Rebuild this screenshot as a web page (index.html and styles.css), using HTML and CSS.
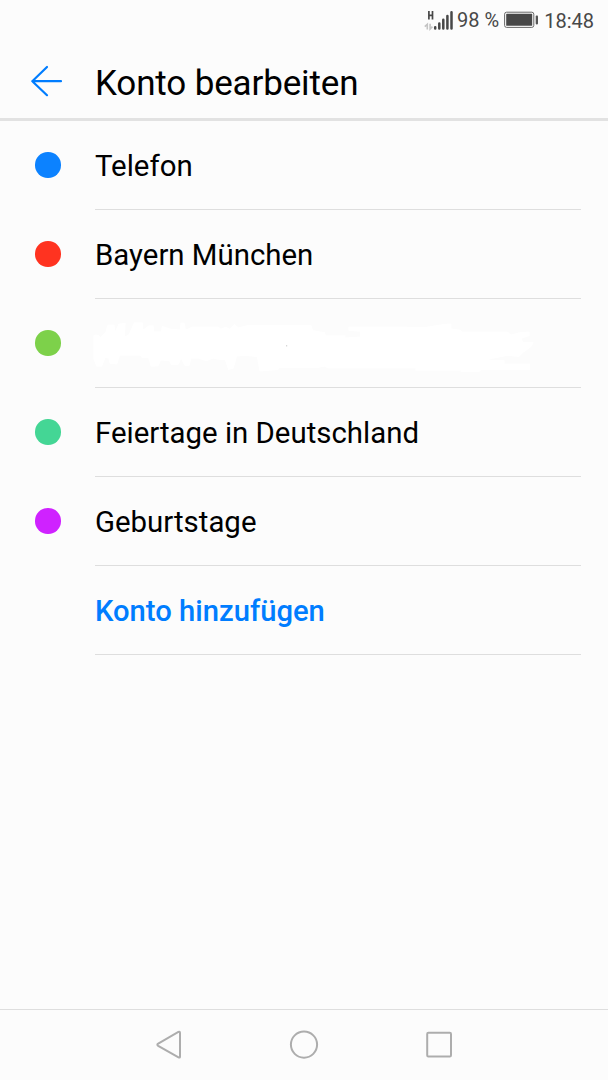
FILE: index.html
```html
<!DOCTYPE html>
<html lang="de">
<head>
<meta charset="utf-8">
<title>Konto bearbeiten</title>
<link rel="stylesheet" href="styles.css">
</head>
<body>
<div class="screen">
  <div class="status">
    <svg class="signal" width="30" height="22" viewBox="0 0 30 22">
      <g fill="none" stroke="#484848" stroke-width="1.7"><path d="M4.9 1v8.5M8.5 1v8.5M4.9 5.3h3.6"/></g>
      <path d="M3.3 19.5V14.3L0.8 16.7M6.1 13.8v5.2l2.3-2.4" fill="none" stroke="#c4c4c4" stroke-width="1.6"/>
      <path d="M11.2 17.2v1.2M15.3 13.4v5M19.3 9.7v8.7M23.4 5.9v12.5M27.5 2.2v16.2" fill="none" stroke="#484848" stroke-width="2.5" stroke-linecap="round"/>
    </svg>
    <span class="percent">98 %</span>
    <svg class="battery" width="35" height="18" viewBox="0 0 35 18">
      <rect x=".6" y="1.2" width="29.2" height="15.2" rx="2" fill="none" stroke="#686868" stroke-width="1"/>
      <rect x="2.2" y="2.8" width="26" height="12" rx=".6" fill="#484848"/>
      <rect x="31.7" y="4.6" width="2.3" height="8.8" rx=".8" fill="#555"/>
    </svg>
    <span class="clock">18:48</span>
  </div>
  <header class="header">
    <svg class="back" width="34" height="34" viewBox="0 0 34 34"><path d="M17 3 2.3 17.2 17 31.2M2.3 17.2H31" fill="none" stroke="#007dff" stroke-width="2.2" stroke-linecap="round" stroke-linejoin="round"/></svg>
    <h1 class="title">Konto bearbeiten</h1>
  </header>
  <main class="list">
    <div class="row"><i class="dot blue"></i><div class="label">Telefon</div></div>
    <div class="row"><i class="dot red"></i><div class="label">Bayern München</div></div>
    <div class="row"><i class="dot green"></i><div class="label">
      <svg class="redaction" width="486" height="61" viewBox="44 20 1444 181">
        <path fill="#fff" d="M39 78Q50 70 60 82L75 68 81 46H102L104 65 114 43 135 40 133 80 144 75 160 39H186L187 60 204 48 218 48 220 66H240L243 49 268 58 296 60 298 40 310 40 314 60 332 52H410L418 58 432 52 445 58 458 44 470 54 496 47H687L692 62 727 68 730 78 788 77V84L832 81V67L797 64V52H970L1020 53 1080 44 1103 42V57L1130 61 1135 67H1270L1280 75 1305 68 1335 66V79L1312 87 1316 98H1348L1340 112 1317 128 1303 142 1270 138 1210 150 1261 151V162H1337V180H1192L1185 186H1130V182H996V175H735L727 170 710 174H592L588 180 533 185 525 142 490 138 466 140 456 176 440 180 430 150 410 150 395 146 375 154 350 146 330 146 325 168H310L300 148 292 165H270L265 154 240 152 232 169 210 171 202 145H184L178 137H118L110 164 88 162 84 146 75 144 65 170 48 170 39 146Z"/>
        <rect x="612" y="107" width="3" height="3" fill="#bbb"/>
      </svg></div></div>
    <div class="row"><i class="dot mint"></i><div class="label">Feiertage in Deutschland</div></div>
    <div class="row"><i class="dot purple"></i><div class="label">Geburtstage</div></div>
    <div class="row"><i class="dot"></i><div class="label add">Konto hinzufügen</div></div>
  </main>
  <nav class="nav">
    <svg width="30" height="30" viewBox="0 0 30 30"><path d="M4.2 13.7 24.4 2Q26 1.3 26 3.1v23.4q0 1.6-1.5.9L4.2 15.8Q2.5 14.7 4.2 13.7Z"/></svg>
    <svg width="30" height="30" viewBox="0 0 30 30"><circle cx="15" cy="14.6" r="13.1"/></svg>
    <svg width="30" height="30" viewBox="0 0 30 30"><rect x="3.2" y="2.7" width="23.8" height="23.8" rx="1.2"/></svg>
  </nav>
</div>
</body>
</html>
```
FILE: styles.css
```css
* { box-sizing: border-box; }
body { margin: 0; background: #fcfcfc; font-family: Roboto, sans-serif; color: #000; }
.screen { width: 608px; height: 1080px; display: flex; flex-direction: column; }
.status { height: 42px; display: flex; align-items: center; padding: 0 14px 2px 424px; color: #484848; font-size: 20px; line-height: 24px; white-space: nowrap; }
.signal { flex: none; margin-top: 1px; }
.percent { width: 47px; padding-left: 3px; flex: none; }
.battery { flex: none; margin-left: 3px; }
.clock { margin-left: auto; padding-top: 2px; }
.header { height: 79px; display: flex; align-items: center; padding-left: 30px; border-bottom: 3px solid #e2e2e2; }
.back { flex: none; margin: 2px 31px 0 0; }
.title { margin: 7px 0 0; font-size: 35px; line-height: 42px; font-weight: 400; letter-spacing: -0.15px; }
.list { flex: 1; }
.row { height: 89px; display: flex; align-items: center; padding: 0 27px 0 35px; }
.dot { width: 25.5px; height: 25.5px; border-radius: 50%; margin: 0 34.5px 1px 0; flex: none; }
.blue { background: #0c82ff; }
.red { background: #ff3320; }
.green { background: #7dd14a; }
.mint { background: #44d695; }
.purple { background: #cf22ff; }
.label { flex: 1; height: 100%; display: flex; align-items: center; padding-top: 1px; border-bottom: 1px solid #dedede; font-size: 29.4px; }
.redaction { overflow: visible; margin-top: 6px; }
.add { color: #007dff; font-weight: 500; font-size: 29.2px; }
.nav { height: 71px; border-top: 1px solid #dedede; display: flex; align-items: center; justify-content: center; gap: 105px; }
.nav svg { fill: none; stroke: #adadad; stroke-width: 2; }
```
